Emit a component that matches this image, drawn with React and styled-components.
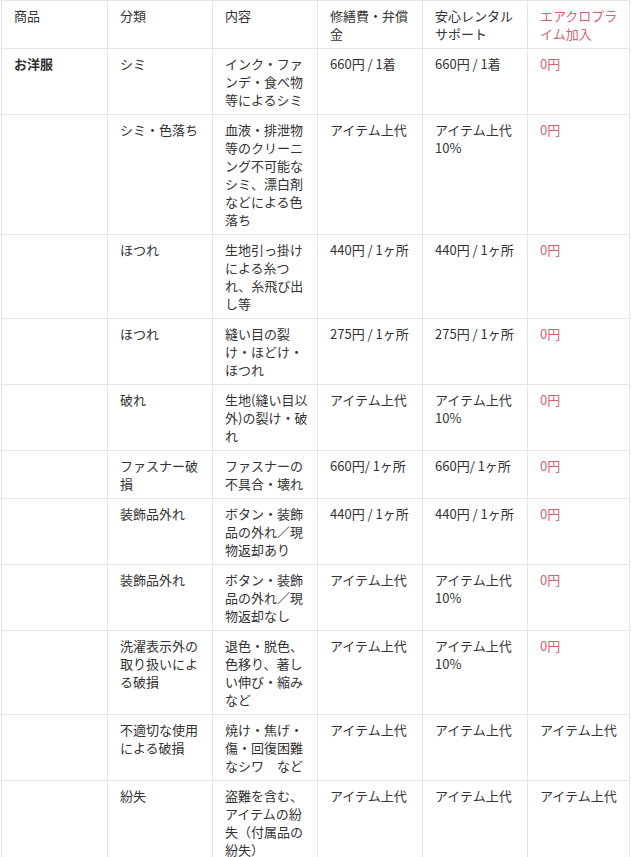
import React from "react";
import styled, { createGlobalStyle } from "styled-components";

const Global = createGlobalStyle`
  html, body { margin: 0; padding: 0; background: #fff; }
  body {
    font-family: "Noto Sans CJK JP", "Noto Sans", sans-serif;
    color: #333;
  }
`;

const Wrap = styled.div`
  padding-left: 1px;
`;

const Table = styled.table`
  width: 628px;
  table-layout: fixed;
  border-collapse: collapse;
  font-size: 13px;
  line-height: 18px;
`;

const Cell = styled.td`
  border: 1px solid #e4e4e4;
  padding: 6px 8px 5px 12px;
  vertical-align: top;
  text-align: left;
  font-weight: ${(p) => (p.$bold ? 700 : 400)};
  color: ${(p) => (p.$red ? "#d65f70" : "#333")};
  word-break: break-all;
`;

const Head = styled(Cell).attrs({ as: "th" })``;

const widths = [106, 105, 105, 105, 105, 102];

const rows = [
  ["お洋服", "シミ", "インク・ファンデ・食べ物等によるシミ", "660円 / 1着", "660円 / 1着", "0円"],
  ["", "シミ・色落ち", "血液・排泄物等のクリーニング不可能なシミ、漂白剤などによる色落ち", "アイテム上代", "アイテム上代10%", "0円"],
  ["", "ほつれ", "生地引っ掛けによる糸つれ、糸飛び出し等", "440円 / 1ヶ所", "440円 / 1ヶ所", "0円"],
  ["", "ほつれ", "縫い目の裂け・ほどけ・ほつれ", "275円 / 1ヶ所", "275円 / 1ヶ所", "0円"],
  ["", "破れ", "生地(縫い目以外)の裂け・破れ", "アイテム上代", "アイテム上代10%", "0円"],
  ["", "ファスナー破損", "ファスナーの不具合・壊れ", "660円/ 1ヶ所", "660円/ 1ヶ所", "0円"],
  ["", "装飾品外れ", "ボタン・装飾品の外れ／現物返却あり", "440円 / 1ヶ所", "440円 / 1ヶ所", "0円"],
  ["", "装飾品外れ", "ボタン・装飾品の外れ／現物返却なし", "アイテム上代", "アイテム上代10%", "0円"],
  ["", "洗濯表示外の取り扱いによる破損", "退色・脱色、色移り、著しい伸び・縮みなど", "アイテム上代", "アイテム上代10%", "0円"],
  ["", "不適切な使用による破損", "焼け・焦げ・傷・回復困難なシワ　など", "アイテム上代", "アイテム上代", "アイテム上代"],
  ["", "紛失", "盗難を含む、アイテムの紛失（付属品の紛失）", "アイテム上代", "アイテム上代", "アイテム上代"],
];

const splitTen = (s) => {
  if (s.endsWith("10%") && s.startsWith("アイテム上代")) {
    return (
      <>
        アイテム上代
        <br />
        10%
      </>
    );
  }
  return s;
};

export default function App() {
  return (
    <>
      <Global />
      <Wrap>
        <Table>
          <colgroup>
            {widths.map((w, i) => (
              <col key={i} style={{ width: w }} />
            ))}
          </colgroup>
          <thead>
            <tr>
              <Head>商品</Head>
              <Head>分類</Head>
              <Head>内容</Head>
              <Head>修繕費・弁償金</Head>
              <Head>安心レンタルサポート</Head>
              <Head $red>エアクロプライム加入</Head>
            </tr>
          </thead>
          <tbody>
            {rows.map((r, i) => (
              <tr key={i}>
                <Cell $bold>{r[0]}</Cell>
                <Cell>{r[1]}</Cell>
                <Cell>{r[2]}</Cell>
                <Cell>{r[3]}</Cell>
                <Cell>{splitTen(r[4])}</Cell>
                <Cell $red={r[5] === "0円"}>{r[5]}</Cell>
              </tr>
            ))}
          </tbody>
        </Table>
      </Wrap>
    </>
  );
}
